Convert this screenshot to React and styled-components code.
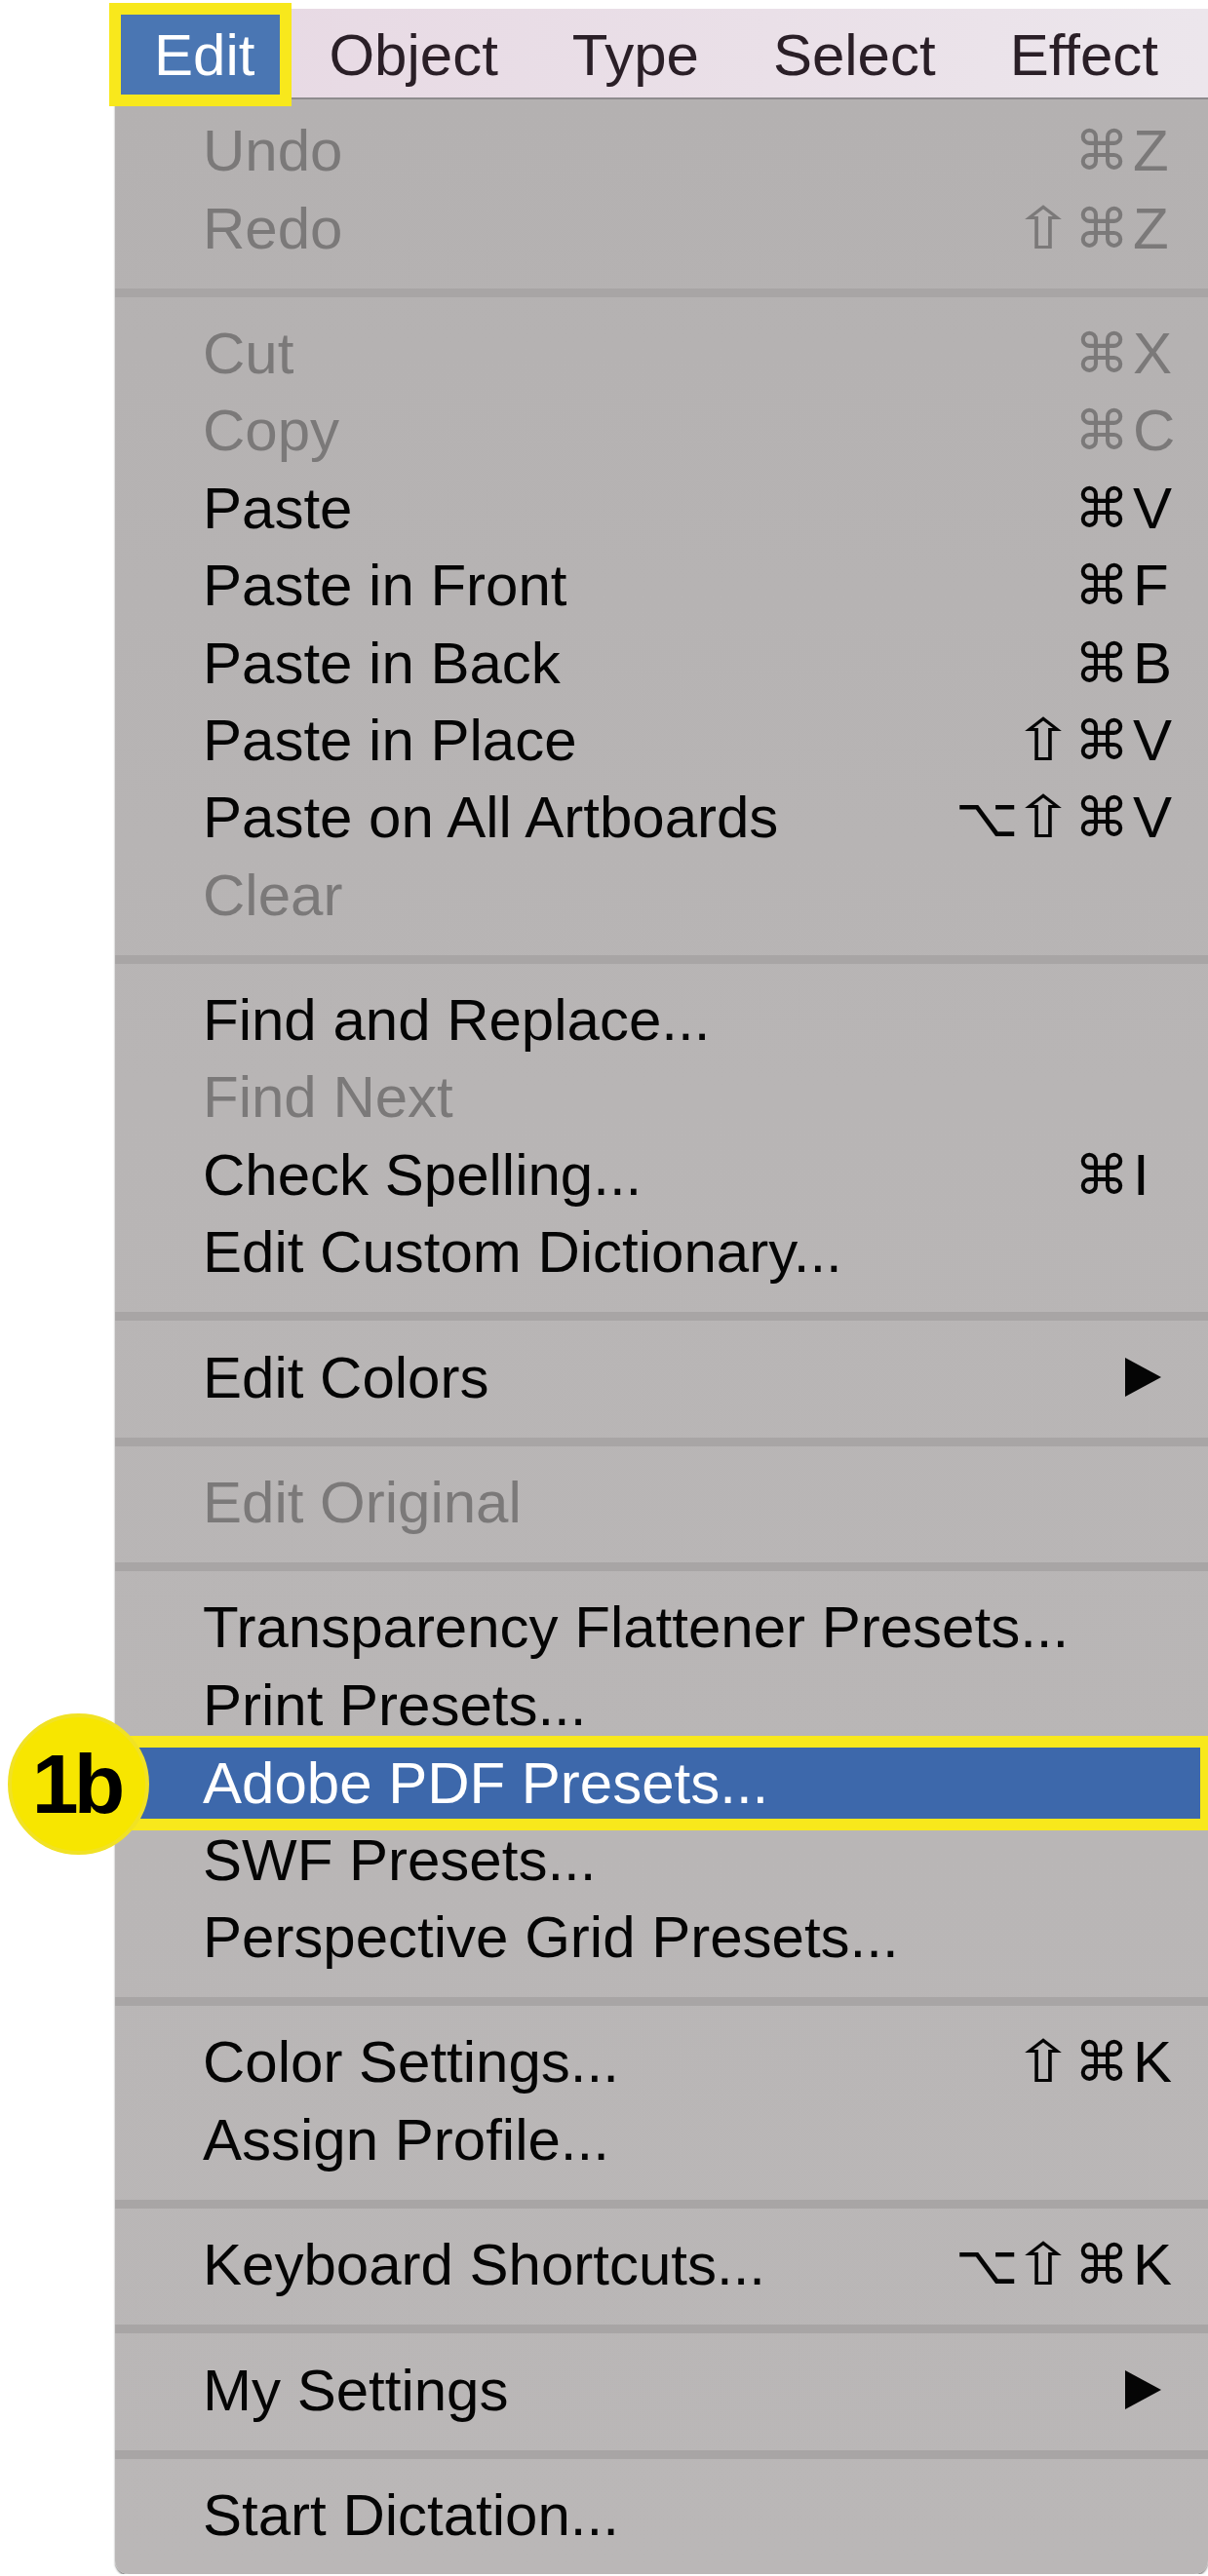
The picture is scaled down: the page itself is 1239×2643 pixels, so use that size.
import React from 'react';
import styled, { createGlobalStyle } from 'styled-components';

const Global = createGlobalStyle`
  html, body { margin: 0; padding: 0; background: #ffffff; overflow: hidden; }
  body { font-family: "Liberation Sans", Arial, sans-serif; }
`;

const Page = styled.div`
  width: 1239px;
  box-sizing: border-box;
  padding: 9px 0 0 118px;
`;

const MenuBar = styled.div`
  display: flex;
  height: 93px;
  box-sizing: border-box;
  padding: 6px 0 3px 6px;
  background: linear-gradient(90deg, #e7d8e3 0%, #eae0e8 60%, #ece6ec 100%);
  border-bottom: 2px solid #8e8b8e;
`;

const MenuTitle = styled.div`
  display: flex;
  align-items: center;
  padding: ${p => (p.$active ? '0 26px 0 34px' : '0 38px')};
  margin-right: ${p => (p.$active ? '12px' : '0')};
  font-size: 60px;
  color: ${p => (p.$active ? '#ffffff' : '#2a1f27')};
  background: ${p => (p.$active ? '#4a76b3' : 'transparent')};
  box-shadow: ${p => (p.$active ? '0 0 0 12px #f8e81c' : 'none')};
  position: ${p => (p.$active ? 'relative' : 'static')};
  z-index: ${p => (p.$active ? 2 : 'auto')};
  white-space: nowrap;
`;

const Dropdown = styled.div`
  background: linear-gradient(180deg, #b4b1b1 0%, #b8b5b5 40%, #bab7b7 100%);
  padding: 13px 0 21px;
  border-radius: 0 0 14px 14px;
  box-shadow: 0 2px 2px rgba(40, 40, 40, 0.55);
`;

const Row = styled.div`
  display: flex;
  align-items: center;
  box-sizing: border-box;
  height: ${p => (p.$active ? '73.4px' : '79.4px')};
  margin: ${p => (p.$active ? '4px 8px 2px 12px' : '0')};
  padding: ${p => (p.$active ? '0 33px 0 78px' : '0 41px 0 90px')};
  font-size: 60px;
  color: ${p => (p.$active ? '#ffffff' : p.$disabled ? '#7b7979' : '#050505')};
  background: ${p => (p.$active ? '#3d68ab' : 'transparent')};
  box-shadow: ${p => (p.$active ? '0 0 0 12px #f8e81c' : 'none')};
  position: ${p => (p.$active ? 'relative' : 'static')};
  z-index: ${p => (p.$active ? 2 : 'auto')};
`;

const Label = styled.span`
  flex: 1;
  white-space: nowrap;
`;

const Shortcut = styled.span`
  display: flex;
  align-items: center;
`;

const Mod = styled.span`
  display: inline-block;
  width: 60px;
  text-align: center;
  font-family: "DejaVu Sans", "Liberation Sans", sans-serif;
  font-size: 56px;
  transform: ${p => (p.$wide ? 'scaleX(1.35) scaleY(1.06)' : 'none')};
`;

const Key = styled.span`
  display: inline-block;
  width: 36px;
  margin-left: 2px;
  text-align: left;
`;

const Arrow = styled.svg`
  width: 37px;
  height: 40px;
  margin-right: 7px;
  display: block;
`;

const Separator = styled.div`
  height: 9px;
  margin: 22px 0 18px;
  background: #a8a5a5;
`;

const Badge = styled.div`
  position: absolute;
  left: -122px;
  top: calc(50% - 72px);
  width: 145px;
  height: 145px;
  box-sizing: border-box;
  border-radius: 50%;
  background: #f7e600;
  border: 4px solid #f1e224;
  display: flex;
  align-items: center;
  justify-content: center;
  font-family: "Liberation Sans", Arial, sans-serif;
  font-weight: 700;
  font-size: 86px;
  letter-spacing: -5px;
  color: #000;
  line-height: 1;
  padding-right: 5px;
`;

const titles = ['Edit', 'Object', 'Type', 'Select', 'Effect'];

const groups = [
  [
    { label: 'Undo', mods: '⌘', key: 'Z', disabled: true },
    { label: 'Redo', mods: '⇧⌘', key: 'Z', disabled: true },
  ],
  [
    { label: 'Cut', mods: '⌘', key: 'X', disabled: true },
    { label: 'Copy', mods: '⌘', key: 'C', disabled: true },
    { label: 'Paste', mods: '⌘', key: 'V' },
    { label: 'Paste in Front', mods: '⌘', key: 'F' },
    { label: 'Paste in Back', mods: '⌘', key: 'B' },
    { label: 'Paste in Place', mods: '⇧⌘', key: 'V' },
    { label: 'Paste on All Artboards', mods: '⌥⇧⌘', key: 'V' },
    { label: 'Clear', disabled: true },
  ],
  [
    { label: 'Find and Replace...' },
    { label: 'Find Next', disabled: true },
    { label: 'Check Spelling...', mods: '⌘', key: 'I' },
    { label: 'Edit Custom Dictionary...' },
  ],
  [{ label: 'Edit Colors', submenu: true }],
  [{ label: 'Edit Original', disabled: true }],
  [
    { label: 'Transparency Flattener Presets...' },
    { label: 'Print Presets...' },
    { label: 'Adobe PDF Presets...', active: true, badge: '1b' },
    { label: 'SWF Presets...' },
    { label: 'Perspective Grid Presets...' },
  ],
  [
    { label: 'Color Settings...', mods: '⇧⌘', key: 'K' },
    { label: 'Assign Profile...' },
  ],
  [{ label: 'Keyboard Shortcuts...', mods: '⌥⇧⌘', key: 'K' }],
  [{ label: 'My Settings', submenu: true }],
  [{ label: 'Start Dictation...' }],
];

function Item({ item }) {
  return (
    <Row $disabled={item.disabled} $active={item.active}>
      {item.badge && <Badge>{item.badge}</Badge>}
      <Label>{item.label}</Label>
      {item.mods && (
        <Shortcut>
          {Array.from(item.mods).map((m, i) => (
            <Mod key={i} $wide={m === '⇧'}>
              {m}
            </Mod>
          ))}
          <Key>{item.key}</Key>
        </Shortcut>
      )}
      {item.submenu && (
        <Arrow viewBox="0 0 37 40">
          <polygon points="0,0 37,20 0,40" fill="#050505" />
        </Arrow>
      )}
    </Row>
  );
}

export default function App() {
  return (
    <>
      <Global />
      <Page>
        <MenuBar>
          {titles.map((t, i) => (
            <MenuTitle key={t} $active={i === 0}>
              {t}
            </MenuTitle>
          ))}
        </MenuBar>
        <Dropdown>
          {groups.map((g, gi) => (
            <React.Fragment key={gi}>
              {gi > 0 && <Separator />}
              {g.map(item => (
                <Item key={item.label} item={item} />
              ))}
            </React.Fragment>
          ))}
        </Dropdown>
      </Page>
    </>
  );
}
